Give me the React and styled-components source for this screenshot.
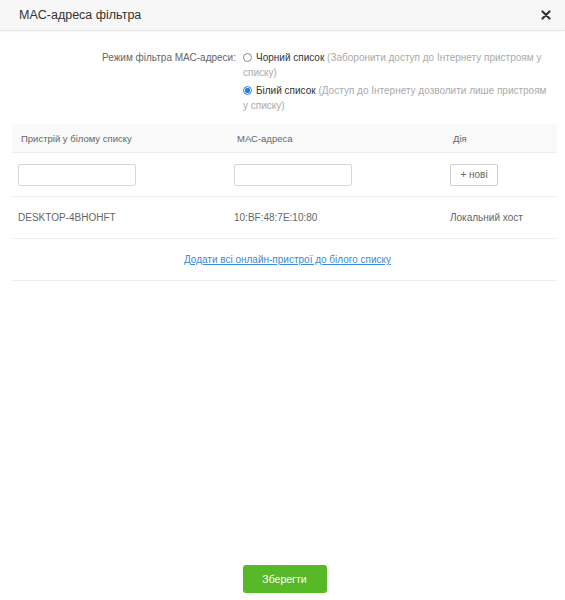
import React, { useState } from "react";
import styled, { createGlobalStyle } from "styled-components";

const GlobalStyle = createGlobalStyle`
  body {
    margin: 0;
    background: #ffffff;
    font-family: "Liberation Sans", Arial, sans-serif;
  }
`;

const Modal = styled.div`
  width: 565px;
  height: 600px;
  display: flex;
  flex-direction: column;
  background: #ffffff;
`;

const Header = styled.div`
  height: 30px;
  flex: none;
  display: flex;
  align-items: center;
  justify-content: space-between;
  padding: 0 13px 0 19px;
  background: #f7f7f7;
  border-bottom: 1px solid #e6e6e6;
  box-shadow: 0 1px 2px rgba(0, 0, 0, 0.04);
`;

const Title = styled.span`
  font-size: 12.5px;
  color: #333;
`;

const Close = styled.button`
  border: none;
  background: none;
  padding: 0;
  width: 12px;
  height: 12px;
  display: flex;
  align-items: center;
  justify-content: center;
  cursor: pointer;
`;

const Body = styled.div`
  flex: 1;
  padding: 18px 8px 0 12px;
`;

const FormRow = styled.div`
  display: flex;
  gap: 7px;
  font-size: 10px;
  line-height: 15px;
  margin-bottom: 11px;
`;

const Label = styled.div`
  width: 224px;
  text-align: right;
  color: #666;
  padding-top: 1px;
`;

const Options = styled.div`
  width: 308px;
  display: flex;
  flex-direction: column;
  gap: 2px;
`;

const Option = styled.label`
  display: block;
  padding-top: 1px;
  cursor: pointer;
`;

const Radio = styled.span`
  display: inline-block;
  box-sizing: border-box;
  width: 9px;
  height: 9px;
  margin-right: 4px;
  border-radius: 50%;
  vertical-align: -1px;
  border: 1px solid ${(p) => (p.checked ? "#2e7ed6" : "#8a8a8a")};
  background: ${(p) => (p.checked ? "radial-gradient(circle, #2e7ed6 0 2.6px, #fff 3px)" : "#fff")};
`;

const OptionName = styled.span`
  color: #333;
`;

const OptionHint = styled.span`
  color: #aaa;
`;

const Table = styled.div`
  width: 545px;
  font-size: 10px;
  color: #666;
`;

const Row = styled.div`
  display: grid;
  grid-template-columns: 216px 216px 1fr;
  align-items: center;
  height: ${(p) => p.h}px;
  background: ${(p) => (p.head ? "#f9f9f9" : "#fff")};
  border-bottom: 1px solid #eeeeee;
`;

const Cell = styled.div`
  padding-left: ${(p) => (p.head ? 9 : 6)}px;
  font-size: ${(p) => (p.head ? 9.5 : 10)}px;
`;

const Input = styled.input`
  box-sizing: border-box;
  width: 118px;
  height: 22px;
  border: 1px solid #d8d8d8;
  border-radius: 2px;
  outline: none;
  padding: 0 4px;
  font-size: 10px;
  font-family: inherit;
`;

const AddButton = styled.button`
  box-sizing: border-box;
  width: 48px;
  height: 22px;
  background: #fff;
  border: 1px solid #cfcfcf;
  border-radius: 2px;
  font-size: 10px;
  font-family: inherit;
  color: #666;
  padding: 0;
  cursor: pointer;
`;

const LinkRow = styled.div`
  height: 41px;
  display: flex;
  align-items: center;
  justify-content: center;
  border-bottom: 1px solid #eeeeee;
  padding-left: 6px;
`;

const Link = styled.a`
  color: #3a8ad6;
  text-decoration: underline;
  font-size: 10px;
  cursor: pointer;
`;

const Footer = styled.div`
  flex: none;
  display: flex;
  justify-content: center;
  padding: 0 0 7px 4px;
`;

const SaveButton = styled.button`
  width: 84px;
  height: 28px;
  border: none;
  border-radius: 3px;
  background: #57b927;
  color: #fff;
  font-size: 10.5px;
  font-family: inherit;
  cursor: pointer;
`;

const modes = [
  { id: "black", name: "Чорний список", hint: "(Заборонити доступ до Інтернету пристроям у списку)" },
  { id: "white", name: "Білий список", hint: "(Доступ до Інтернету дозволити лише пристроям у списку)" },
];

const devices = [{ name: "DESKTOP-4BHOHFT", mac: "10:BF:48:7E:10:80", action: "Локальний хост" }];

export default function App() {
  const [mode, setMode] = useState("white");

  return (
    <Modal>
      <GlobalStyle />
      <Header>
        <Title>MAC-адреса фільтра</Title>
        <Close aria-label="Закрити">
          <svg width="10" height="10" viewBox="0 0 10 10">
            <path d="M1.5 1.5 L8.5 8.5 M8.5 1.5 L1.5 8.5" stroke="#333" strokeWidth="2.2" strokeLinecap="round" />
          </svg>
        </Close>
      </Header>
      <Body>
        <FormRow>
          <Label>Режим фільтра МАС-адреси:</Label>
          <Options>
            {modes.map((m) => (
              <Option key={m.id} onClick={() => setMode(m.id)}>
                <Radio checked={mode === m.id} />
                <OptionName>{m.name}</OptionName> <OptionHint>{m.hint}</OptionHint>
              </Option>
            ))}
          </Options>
        </FormRow>
        <Table>
          <Row head h={28}>
            <Cell head>Пристрій у білому списку</Cell>
            <Cell head>МАС-адреса</Cell>
            <Cell head>Дія</Cell>
          </Row>
          <Row h={43}>
            <Cell>
              <Input />
            </Cell>
            <Cell>
              <Input />
            </Cell>
            <Cell>
              <AddButton>+ нові</AddButton>
            </Cell>
          </Row>
          {devices.map((d) => (
            <Row key={d.mac} h={41}>
              <Cell>{d.name}</Cell>
              <Cell>{d.mac}</Cell>
              <Cell>{d.action}</Cell>
            </Row>
          ))}
          <LinkRow>
            <Link>Додати всі онлайн-пристрої до білого списку</Link>
          </LinkRow>
        </Table>
      </Body>
      <Footer>
        <SaveButton>Зберегти</SaveButton>
      </Footer>
    </Modal>
  );
}
